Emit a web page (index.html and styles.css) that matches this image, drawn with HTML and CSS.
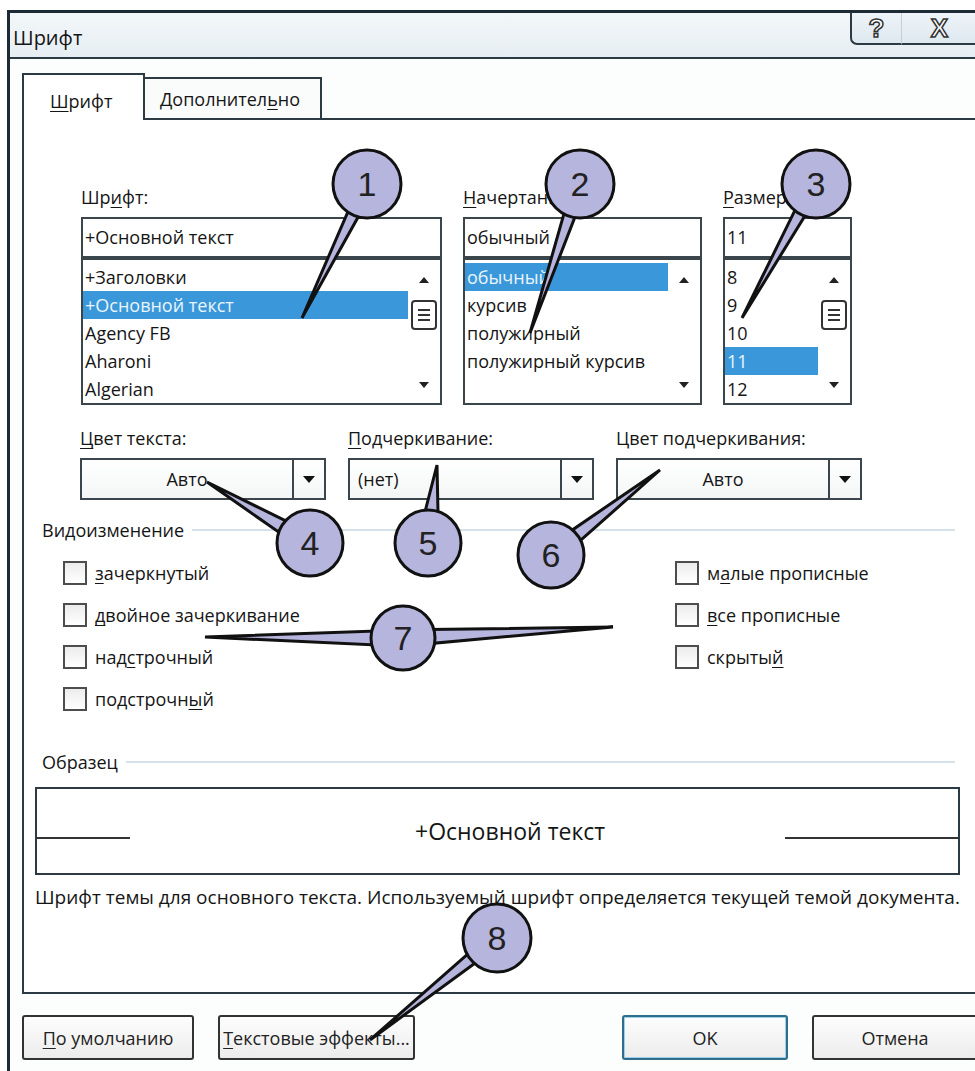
FILE: index.html
```html
<!DOCTYPE html>
<html lang="ru">
<head>
    <meta charset="UTF-8">
    <meta name="viewport" content="width=device-width, initial-scale=1.0">
    <title>Шрифт</title>
    <link rel="stylesheet" href="styles.css">
</head>
<body>

<div class="window">
    <div class="titlebar">
        <span class="title">Шрифт</span>
        <div class="caps">
            <span class="cap help">?</span>
            <span class="cap close">X</span>
        </div>
    </div>

    <div class="client">
        <div class="tabs">
            <div class="tab active"><u>Ш</u>рифт</div>
            <div class="tab">Дополнител<u>ь</u>но</div>
        </div>

        <div class="panel">
            <!-- font / style / size -->
            <div class="fonts">
                <div class="field">
                    <div class="label">Шр<u>и</u>фт:</div>
                    <div class="input">+Основной текст</div>
                    <div class="list">
                        <div class="items">
                            <div class="item">+Заголовки</div>
                            <div class="item sel">+Основной текст</div>
                            <div class="item">Agency FB</div>
                            <div class="item">Aharoni</div>
                            <div class="item">Algerian</div>
                        </div>
                        <div class="scroll">
                            <span class="arr up"></span>
                            <svg class="thumb" width="26" height="30" viewBox="0 0 26 30"><rect x="1" y="1" width="24" height="28" rx="3" fill="#fff" stroke="#333" stroke-width="2"/><path d="M7 10h12M7 15h12M7 20h12" stroke="#333" stroke-width="2"/></svg>
                            <span class="arr down"></span>
                        </div>
                    </div>
                </div>
                <div class="field">
                    <div class="label"><u>Н</u>ачертание:</div>
                    <div class="input">обычный</div>
                    <div class="list">
                        <div class="items">
                            <div class="item sel">обычный</div>
                            <div class="item">курсив</div>
                            <div class="item">полужирный</div>
                            <div class="item">полужирный курсив</div>
                        </div>
                        <div class="scroll">
                            <span class="arr up"></span>
                            <span class="thumb blank"></span>
                            <span class="arr down"></span>
                        </div>
                    </div>
                </div>
                <div class="field">
                    <div class="label"><u>Р</u>азмер:</div>
                    <div class="input">11</div>
                    <div class="list">
                        <div class="items">
                            <div class="item">8</div>
                            <div class="item">9</div>
                            <div class="item">10</div>
                            <div class="item sel">11</div>
                            <div class="item">12</div>
                        </div>
                        <div class="scroll">
                            <span class="arr up"></span>
                            <svg class="thumb" width="26" height="30" viewBox="0 0 26 30"><rect x="1" y="1" width="24" height="28" rx="3" fill="#fff" stroke="#333" stroke-width="2"/><path d="M7 10h12M7 15h12M7 20h12" stroke="#333" stroke-width="2"/></svg>
                            <span class="arr down"></span>
                        </div>
                    </div>
                </div>
            </div>

            <!-- colours and underline -->
            <div class="combos">
                <div class="field">
                    <div class="label"><u>Ц</u>вет текста:</div>
                    <div class="combo"><span class="value center">Авто</span><span class="drop"></span></div>
                </div>
                <div class="field">
                    <div class="label"><u>П</u>одчеркивание:</div>
                    <div class="combo"><span class="value">(нет)</span><span class="drop"></span></div>
                </div>
                <div class="field">
                    <div class="label">Цвет подчеркивания:</div>
                    <div class="combo"><span class="value center">Авто</span><span class="drop"></span></div>
                </div>
            </div>

            <div class="group"><span>Видоизменение</span><span class="rule"></span></div>

            <div class="effects">
                <div class="col">
                    <div class="check"><span class="box"></span><u>з</u>ачеркнутый</div>
                    <div class="check"><span class="box"></span><u>д</u>войное зачеркивание</div>
                    <div class="check"><span class="box"></span>над<u>с</u>трочный</div>
                    <div class="check"><span class="box"></span>подстрочн<u>ы</u>й</div>
                </div>
                <div class="col">
                    <div class="check"><span class="box"></span>м<u>а</u>лые прописные</div>
                    <div class="check"><span class="box"></span><u>в</u>се прописные</div>
                    <div class="check"><span class="box"></span>скрыты<u>й</u></div>
                </div>
            </div>

            <div class="group sample-head"><span>Образец</span><span class="rule"></span></div>

            <div class="sample">
                <span class="line left"></span>
                <span class="sample-text">+Основной текст</span>
                <span class="line right"></span>
            </div>

            <p class="desc">Шрифт темы для основного текста. Используемый шрифт определяется текущей темой документа.</p>
        </div>

        <div class="buttons">
            <button class="btn default"><u>П</u>о умолчанию</button>
            <button class="btn effects-btn"><u>Т</u>екстовые эффекты...</button>
            <button class="btn ok">OK</button>
            <button class="btn">Отмена</button>
        </div>
    </div>
</div>

<svg class="callouts" width="975" height="1071" viewBox="0 0 975 1071">
    <g class="pin">
        <polygon points="350.2,206.5 361,211.8 302,318"/>
        <circle cx="367" cy="184" r="34"/>
        <text x="367" y="196">1</text>
    </g>
    <g class="pin">
        <polygon points="565.7,207.7 577.1,211.5 530,333"/>
        <circle cx="580" cy="184" r="34"/>
        <text x="580" y="196">2</text>
    </g>
    <g class="pin">
        <polygon points="797.7,204.7 808.2,210.5 742,318"/>
        <circle cx="816" cy="184" r="34"/>
        <text x="816" y="196">3</text>
    </g>
    <g class="pin">
        <polygon points="290.4,523.2 283.2,535.2 207,482"/>
        <circle cx="310" cy="543" r="33"/>
        <text x="310" y="555">4</text>
    </g>
    <g class="pin">
        <polygon points="424.1,515.4 438.1,517 437,465"/>
        <circle cx="428" cy="543" r="33"/>
        <text x="428" y="555">5</text>
    </g>
    <g class="pin">
        <polygon points="568,532.9 576.6,543.9 660,470"/>
        <circle cx="551" cy="555" r="33"/>
        <text x="551" y="567">6</text>
    </g>
    <g class="pin">
        <polygon points="376,631 376,645 205,637"/>
        <polygon points="429.6,629.6 430.4,643.6 613,627"/>
        <circle cx="403" cy="638" r="32"/>
        <text x="403" y="650">7</text>
    </g>
    <g class="pin">
        <polygon points="472.2,950.2 479.7,959.6 370,1040"/>
        <circle cx="497" cy="938" r="34"/>
        <text x="497" y="950">8</text>
    </g>
</svg>

</body>
</html>
```

FILE: styles.css
```css
body {
    margin: 0;
    width: 975px;
    height: 1071px;
    overflow: hidden;
    position: relative;
    background: #fff;
    color: #151515;
    font-family: "Open Sans", "Noto Sans", sans-serif;
    font-size: 18px;
}

u {
    text-underline-offset: 3px;
}

.window {
    margin: 10px 0 0 7px;
    width: 985px;
    height: 1061px;
    box-sizing: border-box;
    border-left: 3px solid #1d2b36;
    border-top: 3px solid #1d2b36;
    background: #fcfdfd;
}

.titlebar {
    display: flex;
    height: 44px;
    border-bottom: 2px solid #2c3a44;
    background: linear-gradient(#f3f7f9, #e6eef3);
}

.title {
    font-size: 20px;
    line-height: 24px;
    padding: 13px 0 0 3px;
}

.caps {
    display: flex;
    margin-left: auto;
    margin-right: 15px;
    height: 32px;
}

.cap {
    display: flex;
    align-items: center;
    justify-content: center;
    font-family: "Liberation Sans", sans-serif;
    font-weight: bold;
    font-size: 26px;
    color: #fff;
    -webkit-text-stroke: 1.5px #333;
    border-bottom: 2px solid #2c3a44;
    background: linear-gradient(#eef4f8, #dde8ef);
}

.cap.help {
    width: 49px;
    border-left: 2px solid #2c3a44;
    border-bottom-left-radius: 7px;
}

.cap.close {
    width: 75px;
    border-left: 1px solid #c5d0d6;
}

.client {
    padding: 14px 0 0 12px;
}

.tabs {
    display: flex;
    align-items: flex-end;
    height: 45px;
}

.tab {
    box-sizing: border-box;
    width: 177px;
    height: 41px;
    padding: 8px 0 0 15px;
    line-height: 24px;
    font-size: 18px;
    border-top: 2px solid #2c3a44;
    border-right: 2px solid #2c3a44;
    background: #fafcfc;
}

.tab.active {
    position: relative;
    z-index: 1;
    width: 123px;
    height: 47px;
    margin-bottom: -2px;
    padding: 14px 0 0 26px;
    border-left: 2px solid #2c3a44;
    background: #fff;
}

.panel {
    box-sizing: border-box;
    height: 876px;
    padding: 65px 0 0 11px;
    border: 2px solid #2c3a44;
    background: #fff;
}

.fonts {
    display: grid;
    grid-template-columns: 361px 239px 129px;
    column-gap: 21px;
    margin-left: 46px;
}

.label {
    height: 24px;
    line-height: 24px;
    margin-bottom: 8px;
    white-space: nowrap;
}

.input {
    box-sizing: border-box;
    height: 41px;
    line-height: 37px;
    padding-left: 2px;
    border: 2px solid #3a454c;
    background: #fff;
}

.list {
    display: flex;
    box-sizing: border-box;
    height: 147px;
    padding-top: 3px;
    border: 2px solid #3a454c;
    background: #fff;
}

.items {
    flex: 1;
}

.item {
    height: 28px;
    line-height: 28px;
    padding-left: 2px;
    white-space: nowrap;
}

.item.sel {
    background: #3a98da;
    color: #eaf4fb;
}

.scroll {
    display: flex;
    flex-direction: column;
    align-items: center;
    width: 32px;
}

.arr {
    width: 0;
    height: 0;
    border-left: 5px solid transparent;
    border-right: 5px solid transparent;
}

.arr.up {
    margin-top: 14px;
    border-bottom: 6px solid #222;
}

.arr.down {
    margin-top: 52px;
    border-top: 6px solid #222;
}

.thumb {
    display: block;
    margin-top: 17px;
    width: 26px;
    height: 30px;
}

.combos {
    display: grid;
    grid-template-columns: repeat(3, 246px);
    column-gap: 22px;
    margin: 21px 0 0 45px;
}

.combo {
    display: flex;
    box-sizing: border-box;
    height: 42px;
    border: 2px solid #3a454c;
    background: linear-gradient(#fff, #f4f6f6);
}

.combo .value {
    flex: 1;
    line-height: 38px;
    padding-left: 8px;
}

.combo .value.center {
    text-align: center;
    padding-left: 0;
}

.drop {
    width: 30px;
    border-left: 2px solid #3a454c;
    display: flex;
    align-items: center;
    justify-content: center;
}

.drop::after {
    content: "";
    border-left: 6px solid transparent;
    border-right: 6px solid transparent;
    border-top: 7px solid #111;
}

.group {
    display: flex;
    align-items: center;
    width: 913px;
    margin: 18px 0 0 7px;
    line-height: 24px;
}

.group .rule {
    flex: 1;
    height: 2px;
    margin-left: 8px;
    background: #d4e2ea;
}

.effects {
    display: flex;
    margin: 10px 0 0 28px;
}

.effects .col {
    flex: none;
    width: 612px;
}

.effects .col + .col {
    width: 260px;
}

.check {
    display: flex;
    align-items: center;
    height: 42px;
    white-space: nowrap;
}

.box {
    box-sizing: border-box;
    flex: none;
    width: 24px;
    height: 24px;
    margin-right: 8px;
    border: 2px solid #4d4d4d;
    background: linear-gradient(#ececec, #fff);
}

.sample-head {
    margin-top: 30px;
}

.sample {
    display: flex;
    align-items: center;
    box-sizing: border-box;
    width: 925px;
    height: 88px;
    margin-top: 13px;
    border: 2px solid #2c3a44;
}

.sample .line {
    height: 2px;
    margin-top: 14px;
    background: #333;
}

.sample .line.left {
    width: 93px;
}

.sample .line.right {
    width: 173px;
    margin-left: auto;
}

.sample-text {
    margin-left: 285px;
    font-size: 23px;
}

.desc {
    margin: 10px 0 0;
    line-height: 24px;
    font-size: 19px;
    white-space: nowrap;
}

.buttons {
    display: flex;
    gap: 24px;
    margin-top: 21px;
}

.btn {
    box-sizing: border-box;
    height: 45px;
    width: 166px;
    padding: 0;
    font-family: inherit;
    font-size: 18px;
    color: #222;
    border: 2px solid #333;
    border-radius: 3px;
    background: linear-gradient(#fdfdfd, #ececec);
}

.btn.default {
    width: 172px;
}

.btn.effects-btn {
    width: 197px;
}

.btn.ok {
    margin-left: 183px;
    border-color: #2e6d8c;
    box-shadow: inset 0 0 0 1px #9fd0ea;
}

.callouts {
    position: absolute;
    top: 0;
    left: 0;
    z-index: 5;
    pointer-events: none;
}

.pin polygon,
.pin circle {
    fill: #b6b5de;
    stroke: #111;
    stroke-width: 3;
    stroke-linejoin: miter;
}

.pin text {
    font-family: "Liberation Sans", Arial, sans-serif;
    font-size: 34px;
    fill: #222;
    text-anchor: middle;
}
```
